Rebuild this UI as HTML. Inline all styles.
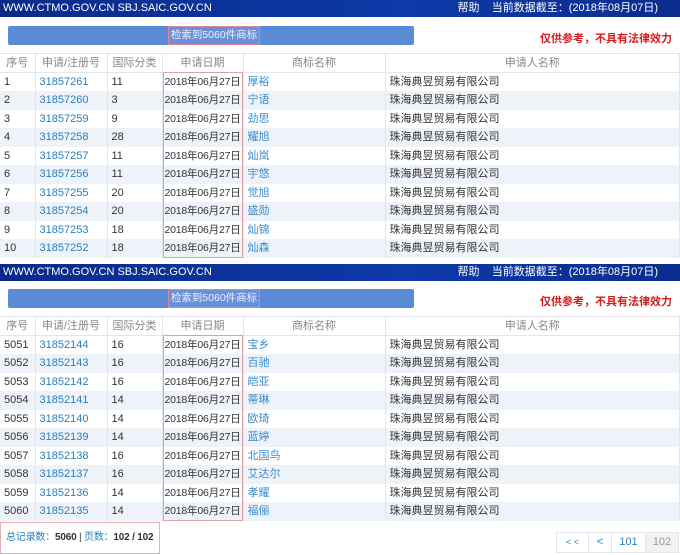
<!DOCTYPE html>
<html><head><meta charset="utf-8"><style>
*{margin:0;padding:0;box-sizing:border-box}
body{width:680px;height:555px;background:#fff;position:relative;overflow:hidden;font-family:"Liberation Sans","Noto Sans CJK SC",sans-serif;font-size:11px;color:#333}
.top{position:absolute;left:0;width:680px;height:17px;background:linear-gradient(90deg,#0a2a8a,#0d3aa8 60%,#0b2c8e);color:#fff;font-size:11px;line-height:17px}
.top .l{position:absolute;left:3px}
.top .r{position:absolute;right:22px}
.bar{position:absolute;left:8px;width:406px;height:19px;background:#5b8ad6;border-radius:2px}
.bar span{position:absolute;left:160px;top:0;width:92px;height:19px;border:1px solid #d88a9a;color:#eef;font-size:10.5px;line-height:17px;text-align:center;background:#6a90d8}
.warn{position:absolute;right:8px;color:#d41c1c;font-weight:bold;font-size:11px}
table{position:absolute;left:0;width:680px;border-collapse:collapse;table-layout:fixed}
td{height:18.5px;line-height:18px;border-right:1px solid #e2e6ec;padding-left:4px;white-space:nowrap;overflow:hidden}
td.d{padding-left:2px;font-size:10.5px;letter-spacing:-0.2px}
tr.h td{color:#888;text-align:center;padding-left:0;border-top:1px solid #e2e6ec;border-bottom:1px solid #e2e6ec}
tr:nth-child(odd):not(.h) td{background:#eef3fa}
.n{color:#2a7fb8}
.m{color:#3a8ccc}
.dbox{position:absolute;left:163px;width:80px;border:1px solid #e0a0a8;pointer-events:none}
.foot{position:absolute;left:0;top:522px;width:160px;height:32px;border:1px solid #e8b0b0;font-size:10px;letter-spacing:-0.2px;line-height:30px;padding-left:5px;color:#333;white-space:nowrap;overflow:hidden}
.foot .b{color:#2a7fb8}
.pg{position:absolute;top:532px;height:21px;border:1px solid #e2e6ec;text-align:center;line-height:19px;font-size:11px;color:#2a7fb8}
</style></head><body>

<div class="top" style="top:0"><span class="l">WWW.CTMO.GOV.CN SBJ.SAIC.GOV.CN</span><span class="r">帮助&nbsp;&nbsp;&nbsp;&nbsp;当前数据截至：(2018年08月07日)</span></div>
<div class="bar" style="top:26px"><span>检索到5060件商标</span></div>
<div class="warn" style="top:30px">仅供参考，不具有法律效力</div>
<table style="top:53px">
<colgroup><col style="width:35px"><col style="width:72px"><col style="width:55px"><col style="width:81px"><col style="width:142px"><col></colgroup>
<tr class="h"><td>序号</td><td>申请/注册号</td><td>国际分类</td><td>申请日期</td><td>商标名称</td><td>申请人名称</td></tr>
<tr><td>1</td><td class="n">31857261</td><td>11</td><td class="d">2018年06月27日</td><td class="m">厚裕</td><td>珠海典昱贸易有限公司</td></tr>
<tr><td>2</td><td class="n">31857260</td><td>3</td><td class="d">2018年06月27日</td><td class="m">宁语</td><td>珠海典昱贸易有限公司</td></tr>
<tr><td>3</td><td class="n">31857259</td><td>9</td><td class="d">2018年06月27日</td><td class="m">劲思</td><td>珠海典昱贸易有限公司</td></tr>
<tr><td>4</td><td class="n">31857258</td><td>28</td><td class="d">2018年06月27日</td><td class="m">耀旭</td><td>珠海典昱贸易有限公司</td></tr>
<tr><td>5</td><td class="n">31857257</td><td>11</td><td class="d">2018年06月27日</td><td class="m">灿岚</td><td>珠海典昱贸易有限公司</td></tr>
<tr><td>6</td><td class="n">31857256</td><td>11</td><td class="d">2018年06月27日</td><td class="m">宇悠</td><td>珠海典昱贸易有限公司</td></tr>
<tr><td>7</td><td class="n">31857255</td><td>20</td><td class="d">2018年06月27日</td><td class="m">觉旭</td><td>珠海典昱贸易有限公司</td></tr>
<tr><td>8</td><td class="n">31857254</td><td>20</td><td class="d">2018年06月27日</td><td class="m">盛勋</td><td>珠海典昱贸易有限公司</td></tr>
<tr><td>9</td><td class="n">31857253</td><td>18</td><td class="d">2018年06月27日</td><td class="m">灿锦</td><td>珠海典昱贸易有限公司</td></tr>
<tr><td>10</td><td class="n">31857252</td><td>18</td><td class="d">2018年06月27日</td><td class="m">灿森</td><td>珠海典昱贸易有限公司</td></tr>
</table>
<div class="dbox" style="top:72px;height:186px"></div>

<div class="top" style="top:264px"><span class="l">WWW.CTMO.GOV.CN SBJ.SAIC.GOV.CN</span><span class="r">帮助&nbsp;&nbsp;&nbsp;&nbsp;当前数据截至：(2018年08月07日)</span></div>
<div class="bar" style="top:289px"><span>检索到5060件商标</span></div>
<div class="warn" style="top:293px">仅供参考，不具有法律效力</div>
<table style="top:316px">
<colgroup><col style="width:35px"><col style="width:72px"><col style="width:55px"><col style="width:81px"><col style="width:142px"><col></colgroup>
<tr class="h"><td>序号</td><td>申请/注册号</td><td>国际分类</td><td>申请日期</td><td>商标名称</td><td>申请人名称</td></tr>
<tr><td>5051</td><td class="n">31852144</td><td>16</td><td class="d">2018年06月27日</td><td class="m">宝乡</td><td>珠海典昱贸易有限公司</td></tr>
<tr><td>5052</td><td class="n">31852143</td><td>16</td><td class="d">2018年06月27日</td><td class="m">百驰</td><td>珠海典昱贸易有限公司</td></tr>
<tr><td>5053</td><td class="n">31852142</td><td>16</td><td class="d">2018年06月27日</td><td class="m">皑亚</td><td>珠海典昱贸易有限公司</td></tr>
<tr><td>5054</td><td class="n">31852141</td><td>14</td><td class="d">2018年06月27日</td><td class="m">蒂琳</td><td>珠海典昱贸易有限公司</td></tr>
<tr><td>5055</td><td class="n">31852140</td><td>14</td><td class="d">2018年06月27日</td><td class="m">欧琦</td><td>珠海典昱贸易有限公司</td></tr>
<tr><td>5056</td><td class="n">31852139</td><td>14</td><td class="d">2018年06月27日</td><td class="m">蓝婷</td><td>珠海典昱贸易有限公司</td></tr>
<tr><td>5057</td><td class="n">31852138</td><td>16</td><td class="d">2018年06月27日</td><td class="m">北国鸟</td><td>珠海典昱贸易有限公司</td></tr>
<tr><td>5058</td><td class="n">31852137</td><td>16</td><td class="d">2018年06月27日</td><td class="m">艾达尔</td><td>珠海典昱贸易有限公司</td></tr>
<tr><td>5059</td><td class="n">31852136</td><td>14</td><td class="d">2018年06月27日</td><td class="m">孝耀</td><td>珠海典昱贸易有限公司</td></tr>
<tr><td>5060</td><td class="n">31852135</td><td>14</td><td class="d">2018年06月27日</td><td class="m">福俪</td><td>珠海典昱贸易有限公司</td></tr>
</table>
<div class="dbox" style="top:335px;height:186px"></div>

<div class="foot"><span class="b">总记录数：</span><b>5060</b> | <span class="b">页数：</span><b>102 / 102</b></div>
<div class="pg" style="left:556px;width:33px;font-size:9px">&lt; &lt;</div>
<div class="pg" style="left:588px;width:24px">&lt;</div>
<div class="pg" style="left:611px;width:35px">101</div>
<div class="pg" style="left:645px;width:34px;color:#999;background:#f2f2f2">102</div>
</body></html>
